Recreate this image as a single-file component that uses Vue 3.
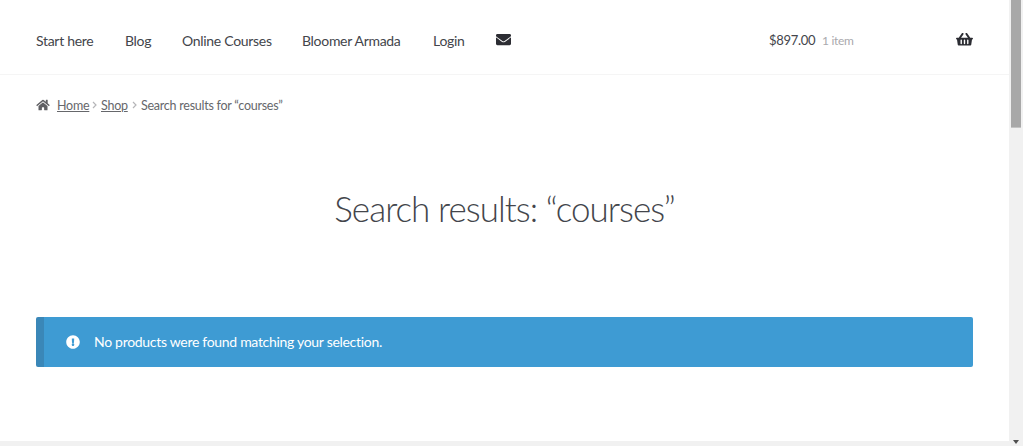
<script setup>
const navItems = [
  { label: "Start here", width: 58 },
  { label: "Blog", width: 26 },
  { label: "Online Courses", width: 89 },
  { label: "Bloomer Armada", width: 100 },
  { label: "Login", width: 32 }
]
</script>

<template>
  <div class="page">
    <main class="content">
      <header class="site-header">
        <nav class="nav">
          <a v-for="item in navItems" :key="item.label" class="nav-link" :style="{ width: item.width + 'px' }">{{ item.label }}</a>
          <svg class="mail" viewBox="0 0 512 512" width="15" height="15">
            <path fill="#2c2d33" d="M502.3 190.8c3.9-3.1 9.7-.2 9.7 4.7V400c0 26.5-21.5 48-48 48H48c-26.5 0-48-21.500-48-48V195.600c0-5 5.700-7.800 9.700-4.700 22.400 17.400 52.100 39.500 154.100 113.600 21.100 15.400 56.700 47.800 92.200 47.600 35.700.3 72-32.800 92.300-47.600 102-74.100 131.600-96.300 154-113.700zM256 320c23.200.4 56.600-29.200 73.400-41.400 132.700-96.300 142.800-104.700 173.400-128.700 5.800-4.500 9.200-11.500 9.200-18.900v-19c0-26.500-21.500-48-48-48H48C21.500 64 0 85.500 0 112v19c0 7.400 3.400 14.300 9.200 18.900 30.600 23.900 40.700 32.400 173.400 128.700 16.800 12.200 50.200 41.800 73.400 41.400z"/>
          </svg>
        </nav>
        <div class="cart">
          <span class="amount">$897.00</span>
          <span class="count">1 item</span>
          <svg class="basket" viewBox="0 0 576 512" width="17" height="15">
            <path fill="#2c2d33" d="M576 216v16c0 13.300-10.700 24-24 24h-8l-26.100 182.800C515.600 452.600 503.800 464 489.600 464H86.400c-14.200 0-26-11.400-28.300-25.200L32 256h-8c-13.300 0-24-10.700-24-24v-16c0-13.300 10.700-24 24-24h67.300l106.800-146.800c10.400-14.300 30.400-17.500 44.700-7.100 14.300 10.400 17.500 30.400 7.100 44.700L170.400 192h235.200L326.100 82.800c-10.400-14.300-7.200-34.300 7.100-44.700 14.300-10.400 34.300-7.200 44.700 7.100L484.700 192H552c13.300 0 24 10.700 24 24zM312 392V280c0-13.300-10.700-24-24-24s-24 10.700-24 24v112c0 13.300 10.700 24 24 24s24-10.700 24-24zm112 0V280c0-13.300-10.700-24-24-24s-24 10.700-24 24v112c0 13.300 10.700 24 24 24s24-10.700 24-24zm-224 0V280c0-13.300-10.700-24-24-24s-24 10.700-24 24v112c0 13.300 10.700 24 24 24s24-10.700 24-24z"/>
          </svg>
        </div>
      </header>

      <div class="breadcrumb">
        <svg class="home" viewBox="0 0 576 512" width="14" height="12">
          <path fill="#5f5f63" d="M280.400 148.300L96 300.100V464a16 16 0 0 0 16 16l112.100-.3a16 16 0 0 0 15.900-16V368a16 16 0 0 1 16-16h64a16 16 0 0 1 16 16v95.600a16 16 0 0 0 16 16.100L464 480a16 16 0 0 0 16-16V300L295.700 148.300a12.200 12.200 0 0 0-15.300 0zM571.600 251.500L488 182.600V44.100a12 12 0 0 0-12-12h-56a12 12 0 0 0-12 12v72.600L318.500 43a48 48 0 0 0-61 0L4.300 251.500a12 12 0 0 0-1.600 16.900l25.500 31A12 12 0 0 0 45.200 301l235.200-193.700a12.200 12.200 0 0 1 15.300 0L530.900 301a12 12 0 0 0 16.900-1.600l25.500-31a12 12 0 0 0-1.700-16.900z"/>
        </svg>
        <a class="crumb crumb-home">Home</a>
        <svg class="sep" viewBox="0 0 5 8" width="5" height="8"><path d="M1 1l3 3-3 3" fill="none" stroke="#b5b5b8" stroke-width="1.200"/></svg>
        <a class="crumb crumb-shop">Shop</a>
        <svg class="sep" viewBox="0 0 5 8" width="5" height="8"><path d="M1 1l3 3-3 3" fill="none" stroke="#b5b5b8" stroke-width="1.200"/></svg>
        <span class="current">Search results for “courses”</span>
      </div>

      <h1 class="title">Search results: “courses”</h1>

      <div class="notice">
        <svg class="notice-icon" viewBox="0 0 512 512" width="14" height="14">
          <path fill="#fff" d="M504 256c0 137-111 248-248 248S8 393 8 256 119 8 256 8s248 111 248 248zm-248 50c-25.400 0-46 20.600-46 46s20.600 46 46 46 46-20.600 46-46-20.600-46-46-46zm-43.700-165.300l7.400 136c.3 6.400 5.600 11.300 12 11.300h48.500c6.400 0 11.600-5 12-11.300l7.400-136c.4-6.900-5.100-12.700-12-12.700h-63.400c-6.900 0-12.400 5.800-12 12.700z"/>
        </svg>
        <span class="notice-text">No products were found matching your selection.</span>
      </div>
    </main>

    <aside class="scrollbar">
      <div class="thumb"></div>
    </aside>
  </div>
  <div class="bottom-bar">
    <span class="arrow"></span>
  </div>
</template>

<style>
html,
body {
  margin: 0;
  overflow: hidden;
}
</style>

<style scoped>
.page {
  display: flex;
  height: 441px;
  background: #fff;
  font-family: "Lato", "Open Sans", sans-serif;
  color: #43454b;
}

.content {
  flex: 1;
  min-width: 0;
}

.site-header {
  display: flex;
  align-items: center;
  justify-content: space-between;
  height: 68px;
  padding: 6px 36px 0;
  border-bottom: 1px solid #f5f5f5;
}

.nav {
  display: flex;
  align-items: center;
  gap: 31px;
  font-size: 14px;
  letter-spacing: -0.3px;
}

.nav-link {
  white-space: nowrap;
  color: #43454b;
}

.mail {
  margin-bottom: 1px;
}

.cart {
  display: flex;
  align-items: center;
  width: 204px;
  font-size: 13px;
  letter-spacing: -0.3px;
}

.amount {
  width: 53px;
}

.count {
  flex: 1;
  font-size: 12px;
  color: #a9a9ad;
}

.basket {
  margin-bottom: 1px;
}

.breadcrumb {
  display: flex;
  align-items: center;
  height: 16px;
  margin-top: 22px;
  padding-left: 36px;
  font-size: 12.500px;
  letter-spacing: -0.25px;
  color: #66676b;
}

.home {
  margin-right: 7px;
}

.crumb {
  text-decoration: underline;
}

.crumb-home {
  width: 31px;
}

.crumb-shop {
  width: 27px;
}

.sep {
  margin: 0 4px 0 4px;
}

.title {
  margin: 72px 0 0;
  font-size: 35px;
  line-height: 46px;
  font-weight: 300;
  letter-spacing: -0.95px;
  text-align: center;
  color: #43454b;
}

.notice {
  display: flex;
  align-items: center;
  gap: 14px;
  height: 50px;
  box-sizing: border-box;
  margin: 86px 36px 0;
  padding-left: 22px;
  border-left: 8px solid #3a87b8;
  border-radius: 2px;
  background: #3e9bd3;
  color: #fff;
  font-size: 14px;
  letter-spacing: -0.3px;
}

.notice-text {
  margin-bottom: 2px;
}

.scrollbar {
  width: 14px;
  background: #f1f1f1;
}

.thumb {
  height: 127px;
  width: 10px;
  margin-left: 2px;
  background: #a8a8a8;
  border-bottom: 1px solid #c4c4c4;
}

.bottom-bar {
  position: relative;
  height: 5px;
  background: #f1f1f1;
}

.arrow {
  position: absolute;
  right: 4px;
  top: -1px;
  border-left: 3px solid transparent;
  border-right: 3px solid transparent;
  border-top: 4px solid #505050;
}
</style>
